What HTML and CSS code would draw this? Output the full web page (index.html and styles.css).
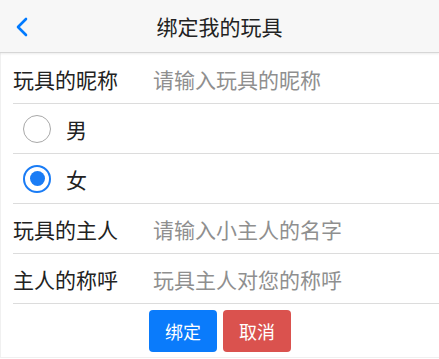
FILE: index.html
```html
<!DOCTYPE html>
<html lang="zh">
<head>
<meta charset="utf-8">
<link rel="stylesheet" href="styles.css">
</head>
<body>
<header class="bar">
  <span class="back">
    <svg width="14" height="20" viewBox="0 0 14 20"><path d="M11 2 L3 10 L11 18" fill="none" stroke="#007aff" stroke-width="2.6" stroke-linecap="round" stroke-linejoin="round"/></svg>
  </span>
  <h1 class="title">绑定我的玩具</h1>
</header>
<main class="form">
  <div class="row">
    <span class="label">玩具的昵称</span>
    <input class="field" placeholder="请输入玩具的昵称">
  </div>
  <div class="row radio-row">
    <span class="radio"></span><span class="radio-text">男</span>
  </div>
  <div class="row radio-row">
    <span class="radio checked"></span><span class="radio-text">女</span>
  </div>
  <div class="row">
    <span class="label">玩具的主人</span>
    <input class="field" placeholder="请输入小主人的名字">
  </div>
  <div class="row">
    <span class="label">主人的称呼</span>
    <input class="field" placeholder="玩具主人对您的称呼">
  </div>
  <div class="actions">
    <button class="btn btn-primary">绑定</button>
    <button class="btn btn-danger">取消</button>
  </div>
</main>
</body>
</html>
```
FILE: styles.css
```css
html, body {
  margin: 0;
  padding: 0;
  background: #fff;
  font-family: "Noto Sans CJK SC", "Noto Sans", sans-serif;
  color: #222;
}
.bar {
  height: 52px;
  background: #f7f7f7;
  border-bottom: 1px solid #d6d6d6;
  box-shadow: 0 1px 2px rgba(0,0,0,0.08);
  display: flex;
  align-items: center;
  justify-content: center;
  position: relative;
}
.back {
  position: absolute;
  left: 15px;
  top: 17px;
  display: flex;
}
.title {
  margin: 0;
  font-size: 21px;
  font-weight: 400;
  color: #222;
  line-height: 1;
}
.form {
  border-left: 1px solid #f0f0f0;
  border-bottom: 1px solid #f0f0f0;
  height: 305px;
  padding-top: 1px;
  box-sizing: border-box;
}
.row {
  margin-left: 12px;
  height: 49px;
  border-bottom: 1px solid #dcdcdc;
  display: flex;
  align-items: center;
}
.label {
  width: 140px;
  flex: none;
  font-size: 21px;
  color: #222;
}
.field {
  flex: 1;
  border: none;
  outline: none;
  padding: 0;
  font-family: inherit;
  font-size: 21px;
  color: #222;
  background: transparent;
}
.field::placeholder {
  color: #8f8f8f;
}
.radio-row {
  padding-left: 10px;
}
.radio {
  width: 28px;
  height: 28px;
  box-sizing: border-box;
  border-radius: 50%;
  border: 1.5px solid #a8a8a8;
  display: flex;
  align-items: center;
  justify-content: center;
}
.radio.checked {
  border: 2.5px solid #1a7cf5;
}
.radio.checked::after {
  content: "";
  width: 15px;
  height: 15px;
  border-radius: 50%;
  background: #1a7cf5;
}
.radio-text {
  margin-left: 15px;
  font-size: 21px;
}
.actions {
  display: flex;
  justify-content: center;
  gap: 6px;
  padding-top: 6px;
}
.btn {
  width: 68px;
  height: 42px;
  border: none;
  border-radius: 4px;
  color: #fff;
  font-family: inherit;
  font-size: 18px;
  padding: 0;
}
.btn-primary { background: #0a7bfb; }
.btn-danger { background: #da524e; }
```
